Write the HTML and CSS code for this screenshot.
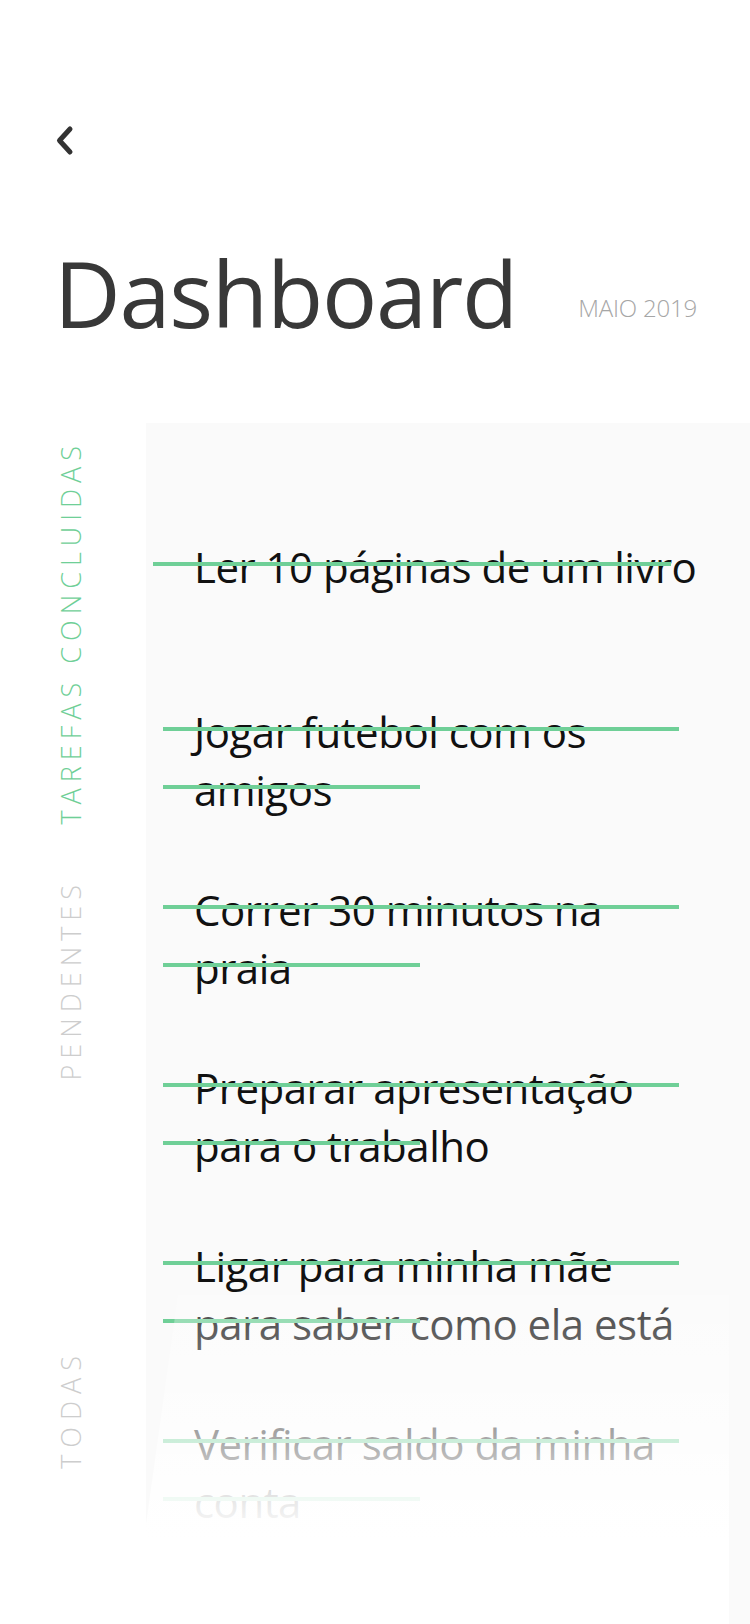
FILE: index.html
```html
<!DOCTYPE html>
<html lang="pt-BR">
<head>
<meta charset="utf-8">
<title>Dashboard</title>
<link rel="stylesheet" href="styles.css">
</head>
<body>
<div class="screen">
  <header class="topbar">
    <button class="back" aria-label="Voltar">
      <svg width="40" height="40" viewBox="0 0 40 40"><path d="M25 9 L14.5 20.5 L25 32" fill="none" stroke="#333" stroke-width="5" stroke-linecap="round" stroke-linejoin="round"/></svg>
    </button>
  </header>
  <div class="title-row">
    <h1 class="title">Dashboard</h1>
    <span class="date">MAIO 2019</span>
  </div>
  <main class="board">
    <nav class="tabs">
      <span class="tab tab--active tab--done">TAREFAS CONCLUIDAS</span>
      <span class="tab tab--pending">PENDENTES</span>
      <span class="tab tab--all">TODAS</span>
    </nav>
    <section class="panel">
      <ul class="tasks">
        <li class="task task--first">
          <span class="task__bar task__bar--first"></span>
          <p class="task__text">Ler 10 páginas de um livro</p>
        </li>
        <li class="task">
          <span class="task__bar"></span><span class="task__bar task__bar--short"></span>
          <p class="task__text">Jogar futebol com os amigos</p>
        </li>
        <li class="task">
          <span class="task__bar"></span><span class="task__bar task__bar--short"></span>
          <p class="task__text">Correr 30 minutos na praia</p>
        </li>
        <li class="task">
          <span class="task__bar"></span><span class="task__bar task__bar--short"></span>
          <p class="task__text">Preparar apresentação para o trabalho</p>
        </li>
        <li class="task">
          <span class="task__bar"></span><span class="task__bar task__bar--short"></span>
          <p class="task__text">Ligar para minha mãe para saber como ela está</p>
        </li>
        <li class="task">
          <span class="task__bar"></span><span class="task__bar task__bar--short"></span>
          <p class="task__text">Verificar saldo da minha conta</p>
        </li>
      </ul>
      <div class="panel__fade"></div>
    </section>
  </main>
</div>
</body>
</html>
```
FILE: styles.css
```css
* { box-sizing: border-box; }
html, body {
  margin: 0;
  padding: 0;
  background: #fff;
}
body {
  font-family: "Open Sans", "Noto Sans", sans-serif;
  color: #111;
}
.screen {
  width: 750px;
  height: 1624px;
  overflow: hidden;
  display: flex;
  flex-direction: column;
  background: #fff;
}
.topbar {
  padding: 120px 0 0 45px;
  height: 160px;
}
.back {
  display: block;
  width: 40px;
  height: 40px;
  padding: 0;
  border: 0;
  background: none;
}
.back svg { display: block; }

.title-row {
  margin-top: 87px;
  display: flex;
  align-items: flex-end;
  justify-content: space-between;
  padding: 0 53px 0 54px;
}
.title {
  margin: 0;
  font-size: 92px;
  line-height: 92px;
  font-weight: 400;
  color: #383838;
  letter-spacing: -1.3px;
}
.date {
  font-size: 24px;
  line-height: 24px;
  color: #a6a6a6;
  margin-bottom: 19px;
  letter-spacing: -0.2px;
  font-weight: 300;
}

.board {
  margin-top: 84px;
  flex: 1;
  display: flex;
}
.tabs {
  width: 146px;
  flex: none;
  display: flex;
  flex-direction: column;
  align-items: flex-start;
  padding-left: 52px;
}
.tab {
  writing-mode: vertical-rl;
  transform: rotate(180deg);
  font-size: 27px;
  line-height: 37px;
  letter-spacing: 6px;
  font-weight: 300;
  color: #cdcdcd;
  white-space: nowrap;
}
.tab--done { margin-top: 17px; }
.tab--active { color: #6fcf97; }
.tab--pending { margin-top: 54px; }
.tab--all { margin-top: 269px; letter-spacing: 7px; }

.panel {
  flex: 1;
  position: relative;
  background: #fafafa;
}
.tasks {
  list-style: none;
  margin: 0;
  padding: 115px 0 0 0;
  display: flex;
  flex-direction: column;
  gap: 62px;
}
.task {
  position: relative;
  padding-left: 48px;
}
.task--first { margin-bottom: 45px; }
.task__text {
  margin: 0;
  max-width: 506px;
  font-size: 42px;
  line-height: 58px;
  letter-spacing: -0.5px;
  color: #111;
}
.task__bar {
  position: absolute;
  left: 17px;
  top: 24px;
  width: 516px;
  height: 4px;
  background: #6fcf97;
}
.task__bar--short {
  top: 82px;
  width: 257px;
}
.task__bar--first {
  left: 7px;
  width: 518px;
}
.panel__fade {
  position: absolute;
  left: 0;
  right: 21px;
  top: 872px;
  bottom: 0;
  background: linear-gradient(to bottom,
    rgba(255,255,255,0.22) 0,
    rgba(255,255,255,0.3) 30px,
    rgba(255,255,255,0.64) 145px,
    rgba(255,255,255,0.9) 205px,
    #fff 245px);
  clip-path: polygon(32px 0, 100% 0, 100% 100%, 0 100%, 0 229px);
}
```
